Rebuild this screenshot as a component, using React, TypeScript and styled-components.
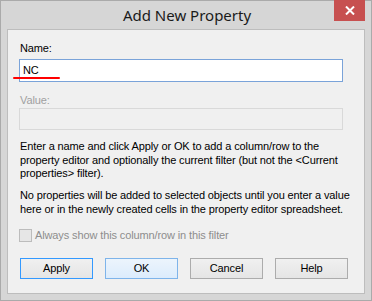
import React from "react";
import styled, { createGlobalStyle } from "styled-components";

const Global = createGlobalStyle`
  html, body { margin: 0; padding: 0; background: #d6d6d6; }
  * { box-sizing: border-box; }
`;

const Window = styled.div`
  position: relative;
  width: 372px;
  height: 301px;
  border: 1px solid #aaaaaa;
  background: #d6d6d6;
  display: flex;
  flex-direction: column;
`;

const TitleBar = styled.div`
  position: relative;
  height: 28px;
  flex: none;
  display: flex;
  justify-content: center;
`;

const Title = styled.div`
  font-family: "Noto Sans", "Open Sans", sans-serif;
  font-size: 15px;
  line-height: 28px;
  color: #1a1a1a;
  padding-left: 2px;
`;

const CloseButton = styled.div`
  position: absolute;
  top: -1px;
  right: 6px;
  width: 31px;
  height: 21px;
  background: #c75050;
  display: flex;
  align-items: center;
  justify-content: center;
`;

const Panel = styled.div`
  flex: 1;
  margin: 0 6px 6px;
  border: 1px solid #bdbdbd;
  background: #f0f0f0;
  padding: 12px 0 0 11px;
  display: flex;
  flex-direction: column;
  font-family: "Liberation Sans", Arial, sans-serif;
  font-size: 11px;
  line-height: 13px;
  letter-spacing: -0.12px;
  color: #000;
`;

const Label = styled.div<{ $disabled?: boolean; $gap?: number }>`
  padding-left: 1px;
  margin-top: ${(p) => p.$gap ?? 0}px;
  color: ${(p) => (p.$disabled ? "#a0a0a0" : "#000")};
`;

const FieldWrap = styled.div<{ $gap: number }>`
  position: relative;
  margin-top: ${(p) => p.$gap}px;
  width: 324px;
`;

const Field = styled.div<{ $disabled?: boolean; $h: number }>`
  height: ${(p) => p.$h}px;
  border: 1px solid ${(p) => (p.$disabled ? "#d9d9d9" : "#7aa3d9")};
  background: ${(p) => (p.$disabled ? "#f0f0f0" : "#ffffff")};
  padding-left: 3px;
  line-height: ${(p) => p.$h - 2}px;
`;

const RedMark = styled.div`
  position: absolute;
  left: -6px;
  top: 18px;
  width: 47px;
  height: 2px;
  background: #ff0000;
  border-radius: 1px;
`;

const Paragraph = styled.p<{ $gap: number }>`
  margin: ${(p) => p.$gap}px 0 0;
  padding-left: 1px;
  line-height: 13.5px;
`;

const CheckRow = styled.div`
  margin-top: 13px;
  display: flex;
  align-items: flex-start;
  gap: 3px;
  color: #8d8d8d;
`;

const CheckBox = styled.div`
  width: 13px;
  height: 13px;
  border: 1px solid #bcbcbc;
  background: #e6e6e6;
`;

const ButtonRow = styled.div`
  margin-top: 16px;
  padding-left: 1px;
  display: flex;
  gap: 12px;
`;

const Button = styled.div<{ $variant?: "default" | "hover" }>`
  width: 73px;
  height: 21px;
  line-height: 19px;
  text-align: center;
  border: 1px solid
    ${(p) =>
      p.$variant === "default" ? "#3399ff" : p.$variant === "hover" ? "#7eb4ea" : "#acacac"};
  background: ${(p) =>
    p.$variant === "hover"
      ? "linear-gradient(#ecf4fc, #dcecfc)"
      : "linear-gradient(#f0f0f0, #e5e5e5)"};
  color: #000;
`;

export default function App() {
  return (
    <>
      <Global />
      <Window>
        <TitleBar>
          <Title>Add New Property</Title>
          <CloseButton>
            <svg width="10" height="9" viewBox="0 0 10 9">
              <path d="M1 0.5 L9 8.5 M9 0.5 L1 8.5" stroke="#fff" strokeWidth="2" />
            </svg>
          </CloseButton>
        </TitleBar>
        <Panel>
          <Label>Name:</Label>
          <FieldWrap $gap={4}>
            <Field $h={23}>NC</Field>
            <RedMark />
          </FieldWrap>
          <Label $disabled $gap={12}>
            Value:
          </Label>
          <FieldWrap $gap={1}>
            <Field $disabled $h={22} />
          </FieldWrap>
          <Paragraph $gap={10}>
            Enter a name and click Apply or OK to add a column/row to the
            <br />
            property editor and optionally the current filter (but not the &lt;Current
            <br />
            properties&gt; filter).
          </Paragraph>
          <Paragraph $gap={8.5}>
            No properties will be added to selected objects until you enter a value
            <br />
            here or in the newly created cells in the property editor spreadsheet.
          </Paragraph>
          <CheckRow>
            <CheckBox />
            <span>Always show this column/row in this filter</span>
          </CheckRow>
          <ButtonRow>
            <Button $variant="default">Apply</Button>
            <Button $variant="hover">OK</Button>
            <Button>Cancel</Button>
            <Button>Help</Button>
          </ButtonRow>
        </Panel>
      </Window>
    </>
  );
}
